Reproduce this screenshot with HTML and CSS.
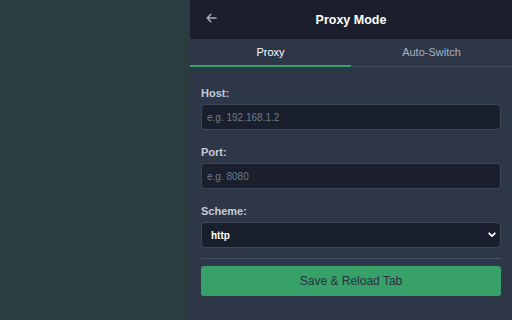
FILE: index.html
```html
<!DOCTYPE html>
<html lang="en">
  <head>
    <meta charset="UTF-8" />
    <meta name="viewport" content="width=device-width, initial-scale=1.0" />
    <title>Proxy Mode</title>
    <link rel="stylesheet" href="styles.css">
  </head>
  <body>
    <div class="page">
      <div class="backdrop"></div>

      <section class="panel">
        <header class="panel__header">
          <button class="back" aria-label="Back">
            <svg width="11" height="10" viewBox="0 0 11 10" fill="none" stroke="currentColor" stroke-width="1.5" stroke-linecap="round" stroke-linejoin="round">
              <path d="M10 5H1.2M4.8 1.2L1.2 5l3.6 3.8" />
            </svg>
          </button>
          <h1>Proxy Mode</h1>
        </header>

        <nav class="tabs">
          <div class="tab tab--active">Proxy</div>
          <div class="tab">Auto-Switch</div>
        </nav>

        <form class="proxy-form" onsubmit="return false;">
          <div class="field">
            <label for="host">Host:</label>
            <input type="text" id="host" placeholder="e.g. 192.168.1.2" />
          </div>
          <div class="field">
            <label for="port">Port:</label>
            <input type="text" id="port" placeholder="e.g. 8080" />
          </div>
          <div class="field field--last">
            <label for="scheme">Scheme:</label>
            <select id="scheme">
              <option>http</option>
              <option>https</option>
              <option>socks4</option>
              <option>socks5</option>
            </select>
          </div>
          <hr class="divider" />
          <button type="submit" class="save">Save &amp; Reload Tab</button>
        </form>
      </section>
    </div>
  </body>
</html>
```

FILE: styles.css
```css
body {
  font-family: "Liberation Sans", Arial, sans-serif;
  margin: 0;
  padding: 0;
  background: #2b3d41;
}
.page {
  display: flex;
  width: 512px;
  height: 320px;
  overflow: hidden;
}
.backdrop {
  width: 190px;
  background: #2b3d41;
}
.panel {
  flex: 1;
  background: #2e3748;
  display: flex;
  flex-direction: column;
}
.panel__header {
  height: 39px;
  background: #1b1f2d;
  display: flex;
  align-items: center;
  justify-content: center;
  position: relative;
}
.panel__header h1 {
  margin: 0;
  font-size: 12.5px;
  font-weight: bold;
  color: #fff;
}
.back {
  position: absolute;
  left: 16px;
  top: 13px;
  padding: 0;
  border: none;
  background: none;
  color: #a7b1c2;
  display: flex;
  cursor: pointer;
}
.tabs {
  display: flex;
  height: 27px;
  border-bottom: 1px solid #434d5e;
}
.tab {
  flex: 1;
  display: flex;
  align-items: center;
  justify-content: center;
  font-size: 11px;
  color: #a9b3c3;
  border-bottom: 2px solid transparent;
  margin-bottom: -1px;
}
.tab--active {
  color: #fff;
  border-bottom-color: #38a169;
}
.proxy-form {
  padding: 19px 11px 0;
  display: flex;
  flex-direction: column;
}
.field {
  display: flex;
  flex-direction: column;
  margin-bottom: 15px;
}
.field--last {
  margin-bottom: 10px;
}
.field label {
  font-size: 11px;
  line-height: 15px;
  font-weight: bold;
  color: #c3cbd8;
  margin-bottom: 3px;
}
.field input,
.field select {
  box-sizing: border-box;
  height: 26px;
  padding: 0 5px;
  background: #1a1f2d;
  border: 1px solid #3d4758;
  border-radius: 4px;
  font-family: inherit;
  font-size: 10px;
  color: #fff;
  outline: none;
}
.field input::placeholder {
  color: #6f7b8e;
}
.field select {
  appearance: none;
  padding: 0 9px;
  font-weight: bold;
  background-image: url("data:image/svg+xml,%3Csvg xmlns='http://www.w3.org/2000/svg' width='8' height='6' viewBox='0 0 8 6'%3E%3Cpath d='M1.2 1.3l2.8 2.8 2.8-2.8' fill='none' stroke='%23ffffff' stroke-width='1.8' stroke-linecap='round' stroke-linejoin='round'/%3E%3C/svg%3E");
  background-repeat: no-repeat;
  background-position: right 4px center;
}
.divider {
  margin: 0 0 7px;
  border: none;
  border-top: 1px solid #475264;
}
.save {
  height: 30px;
  background: #38a169;
  border: none;
  border-radius: 3px;
  color: #263040;
  font-family: inherit;
  font-size: 12px;
  cursor: pointer;
}
```
